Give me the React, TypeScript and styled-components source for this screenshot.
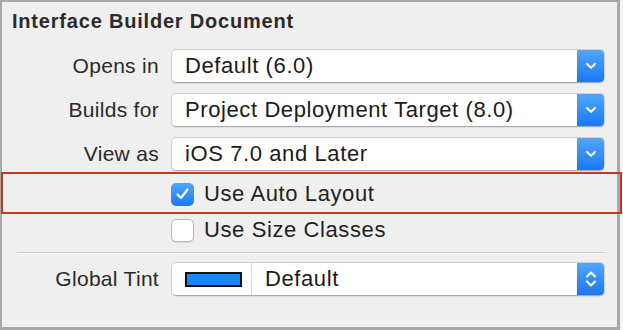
import React from "react";
import styled, { createGlobalStyle } from "styled-components";

const Global = createGlobalStyle`
  html, body { margin: 0; padding: 0; background: #f3f3f3; }
  body { font-family: "Liberation Sans", Arial, sans-serif; }
`;

const Panel = styled.div`
  box-sizing: border-box;
  width: 620px;
  height: 330px;
  background: #efefef;
  border: 2px solid #a9a9a9;
  border-right-width: 3px;
  border-bottom-width: 3px;
  padding: 8px 12px 0 10px;
  display: flex;
  flex-direction: column;
  color: #262626;
`;

const Title = styled.div`
  font-size: 20px;
  font-weight: bold;
  letter-spacing: 0.8px;
  line-height: 23px;
  color: #2b2b2b;
  margin-bottom: 16px;
`;

const Form = styled.div`
  display: flex;
  flex-direction: column;
`;

const Row = styled.div<{ $h: number; $mb?: number }>`
  display: grid;
  grid-template-columns: 147px 1fr;
  column-gap: 12px;
  align-items: center;
  height: ${(p) => p.$h}px;
  margin-bottom: ${(p) => p.$mb ?? 0}px;
  position: relative;
`;

const Highlight = styled.div`
  position: absolute;
  left: -11px;
  right: -17px;
  top: -4px;
  bottom: -2px;
  border: 2px solid #c4391f;
  pointer-events: none;
`;

const Label = styled.div`
  font-size: 21px;
  text-align: right;
  color: #2a2a2a;
  letter-spacing: 0.3px;
`;

const Popup = styled.div`
  box-sizing: border-box;
  height: 34px;
  display: flex;
  align-items: stretch;
  background: #ffffff;
  border: 1px solid #cfcfcf;
  border-bottom-color: #a9a9a9;
  border-radius: 5px;
  box-shadow: 0 1px 0 rgba(0, 0, 0, 0.06);
  overflow: hidden;
`;

const PopupText = styled.div`
  flex: 1;
  display: flex;
  align-items: center;
  padding-left: 13px;
  font-size: 22px;
  letter-spacing: 0.6px;
  color: #1b1b1b;
`;

const BlueButton = styled.div`
  width: 28px;
  display: flex;
  align-items: center;
  justify-content: center;
  background: linear-gradient(#52a8fd, #1976f2);
  margin: -1px -1px -1px 0;
`;

const Swatch = styled.div`
  display: flex;
  align-items: center;
  padding: 0 9px 0 13px;
  border-right: 1px solid #d4d4d4;
`;

const SwatchColor = styled.div`
  box-sizing: border-box;
  width: 57px;
  height: 15px;
  background: #1389fb;
  border: 2px solid #111;
`;

const CheckLine = styled.div`
  display: flex;
  align-items: center;
  gap: 10px;
  font-size: 22px;
  letter-spacing: 0.6px;
  color: #1f1f1f;
`;

const Box = styled.div<{ $on?: boolean }>`
  box-sizing: border-box;
  width: 23px;
  height: 23px;
  border-radius: 5px;
  display: flex;
  align-items: center;
  justify-content: center;
  background: ${(p) => (p.$on ? "linear-gradient(#4fa6fd, #1b7af2)" : "#fff")};
  border: ${(p) => (p.$on ? "none" : "1px solid #b9b9b9")};
  box-shadow: ${(p) => (p.$on ? "none" : "0 1px 1px rgba(0,0,0,0.08)")};
`;

const Separator = styled.div`
  margin: 4px 0 8px 5px;
  height: 1px;
  background: #cdcdcd;
  border-bottom: 1px solid #f8f8f8;
`;

const Chevron = () => (
  <svg width="12" height="8" viewBox="0 0 12 8">
    <path d="M2 2 L6 5.8 L10 2" fill="none" stroke="#fff" strokeWidth="2" strokeLinecap="round" strokeLinejoin="round" />
  </svg>
);

const UpDown = () => (
  <svg width="12" height="20" viewBox="0 0 12 20">
    <path d="M2 7.5 L6 3.5 L10 7.5" fill="none" stroke="#fff" strokeWidth="2" strokeLinecap="round" strokeLinejoin="round" />
    <path d="M2 12.5 L6 16.5 L10 12.5" fill="none" stroke="#fff" strokeWidth="2" strokeLinecap="round" strokeLinejoin="round" />
  </svg>
);

const Check = () => (
  <svg width="15" height="14" viewBox="0 0 15 14">
    <path d="M2.5 7.5 L6 11 L12.5 2.5" fill="none" stroke="#fff" strokeWidth="2.2" strokeLinecap="round" strokeLinejoin="round" />
  </svg>
);

const PopupRow = ({ label, value }: { label: string; value: string }) => (
  <Row $h={34} $mb={10}>
    <Label>{label}</Label>
    <Popup>
      <PopupText>{value}</PopupText>
      <BlueButton>
        <Chevron />
      </BlueButton>
    </Popup>
  </Row>
);

export default function App() {
  return (
    <>
      <Global />
      <Panel>
        <Title>Interface Builder Document</Title>
        <Form>
          <PopupRow label="Opens in" value="Default (6.0)" />
          <PopupRow label="Builds for" value="Project Deployment Target (8.0)" />
          <Row $h={34} $mb={5}>
            <Label>View as</Label>
            <Popup>
              <PopupText>iOS 7.0 and Later</PopupText>
              <BlueButton>
                <Chevron />
              </BlueButton>
            </Popup>
          </Row>
          <Row $h={36}>
            <span />
            <CheckLine>
              <Box $on>
                <Check />
              </Box>
              Use Auto Layout
            </CheckLine>
            <Highlight />
          </Row>
          <Row $h={36}>
            <span />
            <CheckLine>
              <Box />
              Use Size Classes
            </CheckLine>
          </Row>
          <Separator />
          <Row $h={33}>
            <Label>Global Tint</Label>
            <Popup>
              <Swatch>
                <SwatchColor />
              </Swatch>
              <PopupText>Default</PopupText>
              <BlueButton>
                <UpDown />
              </BlueButton>
            </Popup>
          </Row>
        </Form>
      </Panel>
    </>
  );
}
